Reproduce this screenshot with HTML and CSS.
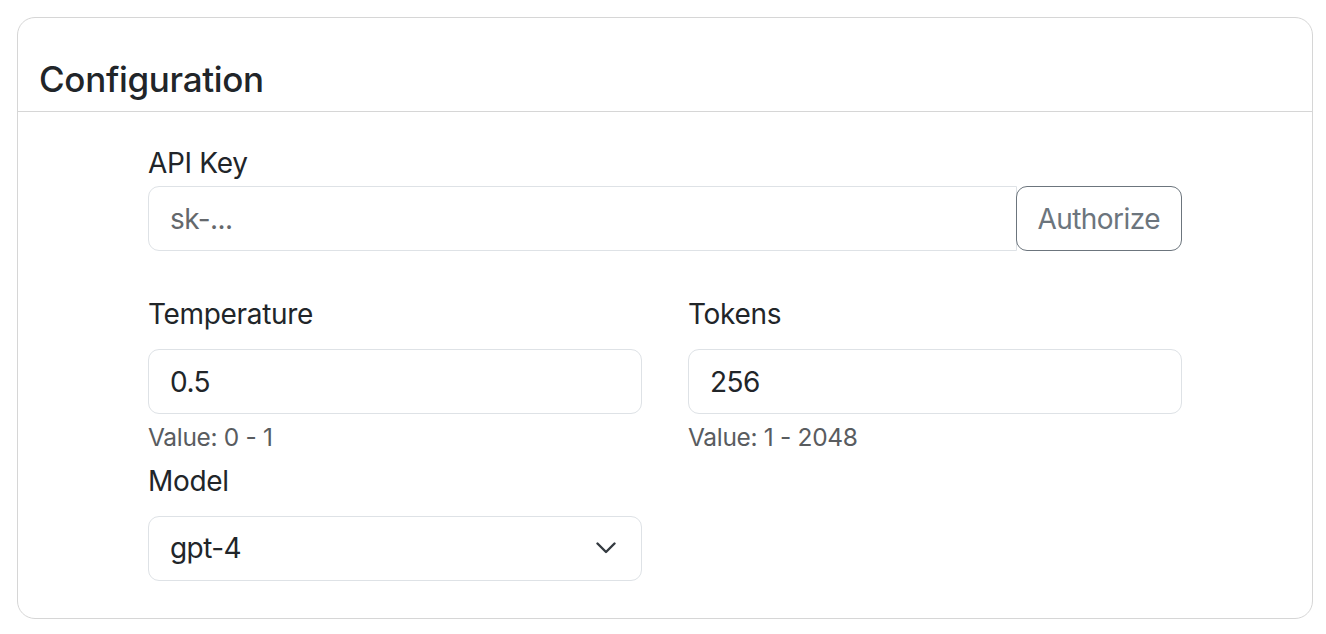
FILE: index.html
```html
<!DOCTYPE html>
<html lang="en">
<head>
<meta charset="utf-8">
<title>Configuration</title>
<link rel="stylesheet" href="styles.css">
</head>
<body>
  <div class="card">
    <div class="card-header">
      <h5 class="card-title">Configuration</h5>
    </div>
    <div class="card-body">
      <div class="field">
        <label class="label label-tight" for="apikey">API Key</label>
        <div class="input-group">
          <input class="control control-grouped" id="apikey" type="text" placeholder="sk-...">
          <button class="btn-outline" type="button">Authorize</button>
        </div>
      </div>
      <div class="grid">
        <div class="field">
          <label class="label" for="temp">Temperature</label>
          <input class="control" id="temp" type="text" value="0.5">
          <div class="help">Value: 0 - 1</div>
        </div>
        <div class="field">
          <label class="label" for="tokens">Tokens</label>
          <input class="control" id="tokens" type="text" value="256">
          <div class="help">Value: 1 - 2048</div>
        </div>
        <div class="field field-model">
          <label class="label">Model</label>
          <div class="control select">
            <span>gpt-4</span>
            <svg class="chevron" width="20" height="12" viewBox="0 0 20 12" aria-hidden="true">
              <path d="M1.5 1.5 L10 10 L18.5 1.5" fill="none" stroke="#343a40" stroke-width="2.4" stroke-linecap="round" stroke-linejoin="round"/>
            </svg>
          </div>
        </div>
      </div>
    </div>
  </div>
</body>
</html>
```
FILE: styles.css
```css
* { box-sizing: border-box; }

html, body {
  margin: 0;
  background: #ffffff;
}

body {
  padding: 17px 13px 0 17px;
  font-family: "Inter", "Liberation Sans", sans-serif;
  color: #212529;
  letter-spacing: -0.02em;
}

.card {
  border: 1px solid #d6d6d6;
  border-radius: 18px;
  background: #ffffff;
}

.card-header {
  padding: 40px 21px 11px;
  border-bottom: 1px solid #d6d6d6;
}

.card-title {
  margin: 0;
  font-size: 35px;
  line-height: 42px;
  font-weight: 500;
  color: #212529;
}

.card-body {
  padding: 30px 130px 37px;
}

.label {
  display: block;
  font-size: 28px;
  line-height: 42px;
  margin-bottom: 14px;
  color: #212529;
}

.label-tight { margin-bottom: 2px; }

.input-group {
  display: flex;
  align-items: stretch;
}

.control {
  display: block;
  width: 100%;
  height: 65px;
  padding: 10.5px 21px;
  font-family: inherit;
  font-size: 28px;
  line-height: 42px;
  letter-spacing: -0.02em;
  color: #212529;
  background: #ffffff;
  border: 1px solid #dee2e6;
  border-radius: 11px;
  outline: none;
}

.control::placeholder { color: #64686c; opacity: 1; }

.control-grouped {
  flex: 1;
  min-width: 0;
  border-radius: 11px 0 0 11px;
}

.btn-outline {
  margin-left: -1px;
  padding: 10.5px 21px;
  font-family: inherit;
  font-size: 28px;
  line-height: 42px;
  letter-spacing: -0.02em;
  color: #6c757d;
  background: #ffffff;
  border: 1px solid #6c757d;
  border-radius: 11px;
}

.grid {
  display: grid;
  grid-template-columns: 1fr 1fr;
  column-gap: 46px;
  margin-top: 42px;
}

.help {
  margin-top: 5px;
  font-size: 24.5px;
  line-height: 36.75px;
  color: #595c5f;
}

.field-model { margin-top: 4px; }

.select {
  display: flex;
  align-items: center;
  justify-content: space-between;
  padding-right: 25px;
}

.chevron { display: block; }
```
